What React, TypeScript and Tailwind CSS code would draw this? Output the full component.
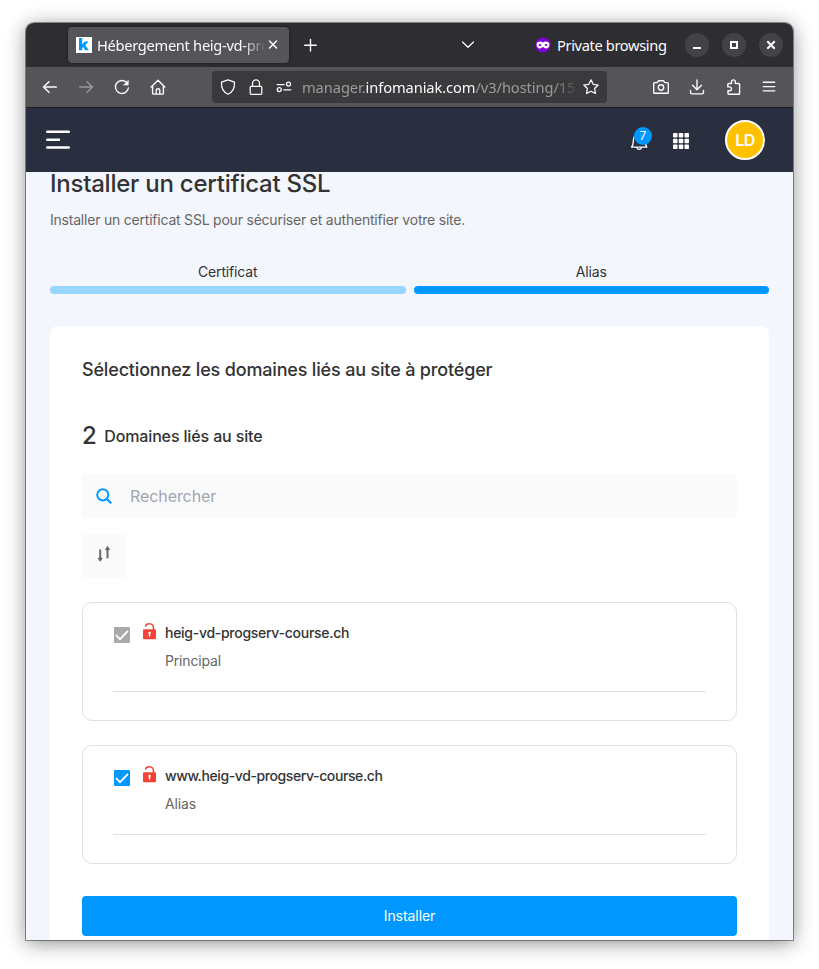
import React from "react";

const ui = "font-['Noto_Sans',sans-serif]";

type IconProps = { children: React.ReactNode; size?: number; className?: string; sw?: number };

function Icon({ children, size = 16, className = "text-[#fbfbfe]", sw = 1.25 }: IconProps) {
  return (
    <svg
      width={size}
      height={size}
      viewBox={`0 0 ${size} ${size}`}
      className={`shrink-0 ${className}`}
      fill="none"
      stroke="currentColor"
      strokeWidth={sw}
      strokeLinecap="round"
      strokeLinejoin="round"
    >
      {children}
    </svg>
  );
}

function TabBar() {
  return (
    <div className={`flex h-11 shrink-0 items-center bg-[#2e2d32] text-[#fbfbfe] ${ui}`}>
      <div className="ml-[42px] flex h-9 w-[221px] items-center rounded bg-[#555459] pl-2 shadow-[0_0_3px_rgba(0,0,0,0.5)]">
        <svg width="16" height="16" viewBox="0 0 16 16" className="shrink-0">
          <rect width="16" height="16" fill="#fff" />
          <path d="M3 1h3.2v6.6L8.8 4.6h3.7L9.3 8.2l3.6 5.1H9.2L7.2 10l-1 1.1v2.2H3z" fill="#0098ff" />
        </svg>
        <div className="ml-[5px] w-[169px] overflow-hidden whitespace-nowrap text-[14.67px] leading-5 tracking-[-0.300px] [mask-image:linear-gradient(to_right,black_146px,transparent_169px)]">
          Hébergement heig-vd-pro
        </div>
        <Icon size={16} className="-ml-[1px] text-[#fbfbfe]" sw={1.5}>
          <path d="M4.500 4l7 7M11.500 4l-7 7" />
        </Icon>
      </div>
      <Icon className="ml-[14px]" sw={1.4}>
        <path d="M7.500 2.500v11.500M1.700 8.300h11.600" />
      </Icon>
      <Icon className="ml-[141px]">
        <path d="M2.500 5l5.500 5.3L13.500 5" />
      </Icon>
      <svg width="16" height="16" viewBox="0 0 16 16" className="ml-[59px] shrink-0">
        <circle cx="8" cy="8" r="7.6" fill="#8000d7" />
        <path
          fillRule="evenodd"
          d="M1.600 6.800C2.200 4.500 5.800 4 8 5.400c2.200-1.400 5.800-.9 6.400 1.400.3 3.200-1.300 4.700-3.300 4.700-1.600 0-2.300-1.400-3.100-1.400s-1.500 1.400-3.100 1.400c-2 0-3.600-1.500-3.300-4.700zM3.400 8c.7 1.300 2.400 1.300 3.200 0-.8-1.300-2.500-1.300-3.200 0zm6 0c.8 1.300 2.500 1.300 3.200 0-.7-1.300-2.400-1.300-3.200 0z"
          fill="#fff"
        />
      </svg>
      <span className="ml-1.5 w-[110px] whitespace-nowrap text-[14.67px] leading-5 tracking-[-0.370px]">Private browsing</span>
      <div className="ml-[18px] flex gap-[13px]">
        <div className="flex size-6 items-center justify-center rounded-full bg-[#434247]">
          <div className="mt-[6px] h-[2px] w-2 bg-white" />
        </div>
        <div className="flex size-6 items-center justify-center rounded-full bg-[#434247]">
          <div className="size-2 border-2 border-white" />
        </div>
        <div className="flex size-6 items-center justify-center rounded-full bg-[#434247]">
          <svg width="10" height="10" viewBox="0 0 10 10" stroke="#fff" strokeWidth="2">
            <path d="M1.300 1.300l7.400 7.400M8.700 1.300L1.300 8.700" />
          </svg>
        </div>
      </div>
    </div>
  );
}

function NavBar() {
  return (
    <div className={`flex h-[41px] shrink-0 items-center border-b border-[#1d1d20] bg-[#555459] ${ui}`}>
      <div className="ml-4 flex gap-5">
        <Icon sw={1.5}><path d="M14.300 8H1.500M7 2.700L1.500 8 7 13.300" /></Icon>
        <Icon sw={1.4} className="text-[#99989b]"><path d="M1.700 8h12.800M9 2.700L14.500 8 9 13.300" /></Icon>
        <Icon sw={1.4}>
          <path d="M13.100 4A6.500 6.500 0 1 0 14.400 9" />
          <path d="M14.300 1.500v4.600H9.700z" fill="currentColor" strokeWidth="0.500" />
        </Icon>
        <Icon sw={1.4}>
          <path d="M1.200 8L8 1.300 14.800 8M2.600 7v7.200q0 .9.900.9h9q.9 0 .9-.9V7M6.200 15v-3.800q0-1.500 1.800-1.500t1.800 1.500V15" />
        </Icon>
      </div>
      <div className="ml-[46px] flex h-8 w-[395px] items-center rounded bg-[#3a393b] pl-2">
        <div className="flex gap-3">
          <Icon><path d="M8 .8L14.500 3.200C14.800 8.500 13 13 8 15.200 3 13 1.200 8.500 1.500 3.200z" /></Icon>
          <Icon><path d="M3.200 7.300h9.600q1 0 1 1v6q0 1-1 1H3.200q-1 0-1-1v-6q0-1 1-1zM4.500 7V4.300a3.500 3.500 0 0 1 7 0V7" /></Icon>
          <Icon><path d="M1.200 5.600h7M7.800 10.800h7" /><circle cx="12.500" cy="5.100" r="2" /><circle cx="3.300" cy="10.600" r="2" /></Icon>
        </div>
        <div className="ml-[10px] w-[273px] overflow-hidden whitespace-nowrap text-[14.67px] leading-5 tracking-[-0.080px] text-[#9c9b9d] [mask-image:linear-gradient(to_right,black_250px,transparent_278px)]">
          manager.<span className="text-[#fbfbfe]">infomaniak.com</span>/v3/hosting/15
        </div>
        <Icon className="ml-2 text-[#fbfbfe]">
          <path d="M8 .8l2.200 4.500 5 .7-3.600 3.500.9 5L8 12.200 3.500 14.500l.9-5L.8 6l5-.7z" />
        </Icon>
      </div>
      <div className="ml-[46px] flex gap-5">
        <Icon sw={1.4}>
          <path d="M1.500 3.600h2.700L5.600 1.700h4.800l1.400 1.900h2.700q.8 0 .8.800v9q0 .8-.8.800h-13q-.8 0-.8-.8v-9q0-.8.800-.8z" />
          <circle cx="8" cy="8.500" r="2.700" />
        </Icon>
        <Icon sw={1.4}><path d="M8 1v9.500M3.500 6.300L8 10.700l4.500-4.400M1.500 11.500v1.700q0 1.700 1.700 1.700h9.600q1.700 0 1.700-1.700v-1.700" /></Icon>
        <Icon sw={1.4} className="ml-px text-[#fbfbfe]">
          <path d="M5.500 4.500V2.800a1.900 1.900 0 0 1 3.800 0v1.700H12.600q1 0 1 1v9q0 .8-.8.800H3q-1 0-1-1v-2.600h1.600a1.900 1.900 0 0 0 0-3.800H1.800V5.500q0-1 1-1z" />
        </Icon>
        <Icon sw={1.4} className="-ml-px text-[#fbfbfe]"><path d="M2.300 3.300h11.400M2.300 7.600h11.400M2.300 11.900h11.400" /></Icon>
      </div>
    </div>
  );
}

function AppHeader() {
  return (
    <header className="flex h-16 shrink-0 items-center justify-between bg-[#292f3e] pl-5 pr-7">
      <svg width="24" height="20" viewBox="0 0 24 20" stroke="#fff" strokeWidth="2.400" strokeLinecap="round">
        <path d="M1.200 1.700h21.600M1.200 9.700h11.800M1.200 17.500h21.600" />
      </svg>
      <div className="flex items-center">
        <div className="relative mr-[26px] h-[18px] w-4">
          <svg width="18" height="20" viewBox="0 0 18 20" fill="none" stroke="#fff" strokeWidth="1.300">
            <path d="M.4 16.200h15.400c-1.300-1.700-1.500-4-1.500-7C14.300 5.500 12 3 8.500 3 4.700 3 2.400 5.500 2.400 9c0 3-.4 5.400-2 7.200zM5.900 16.600c.6 2.400 4 2.400 4.600 0" strokeLinejoin="round" />
          </svg>
          <span className="absolute -top-1 left-[3px] flex size-[18px] items-center justify-center rounded-full bg-[#0098ff] font-['Inter',sans-serif] text-xs leading-none text-white">
            7
          </span>
        </div>
        <svg width="16" height="16" viewBox="0 0 16 16" fill="#fff" className="mt-[2px]">
          {[0, 5.75, 11.5].flatMap((y) =>
            [0, 5.75, 11.5].map((x) => <rect key={`${x}-${y}`} x={x} y={y} width="4.500" height="4.500" rx="0.800" />)
          )}
        </svg>
        <div className="ml-9 flex size-10 items-center justify-center rounded-full border-2 border-white bg-[#ffc100] text-base font-semibold tracking-[-0.500px] text-white">
          LD
        </div>
      </div>
    </header>
  );
}

function DomainCard({ name, kind, locked }: { name: string; kind: string; locked: boolean }) {
  return (
    <div className="h-[119px] rounded-[10px] border border-[#e0e0e0] px-[30px] pt-5">
      <div className="flex h-[69px] items-start border-b border-[#e0e0e0]">
        <svg width="16" height="16" viewBox="0 0 16 16" className="ml-px mt-1 shrink-0">
          <rect width="16" height="16" rx="1" className={locked ? "fill-[#a9a9a9]" : "fill-[#0098ff]"} />
          <path d="M2 8.200l4 4 8-8.400" fill="none" stroke="#fff" strokeWidth="1.700" />
        </svg>
        <svg width="13" height="17" viewBox="0 0 13 17" className="ml-[13px] shrink-0">
          <path d="M2.400 3.600C3.200-.2 10.400-.1 10.400 4.300V7" fill="none" stroke="#f44336" strokeWidth="1.500" />
          <rect y="6.300" width="13" height="10" rx="1" fill="#f44336" />
          <path d="M5.200 10a1.300 1.300 0 1 1 2 1.100v2.300H5.800v-2.300z" fill="#fff" />
        </svg>
        <div className="ml-[9px] whitespace-nowrap text-sm leading-5">
          <div className={`font-[550] text-[#333] ${locked ? "tracking-[-0.280px]" : "tracking-[-0.400px]"}`}>{name}</div>
          <div className="mt-2 tracking-[-0.160px] text-[#666]">{kind}</div>
        </div>
      </div>
    </div>
  );
}

function Step({ label, active }: { label: string; active: boolean }) {
  return (
    <div className="flex-1">
      <div className="mb-1 text-center text-sm leading-5 tracking-[-0.160px] text-[#333]">{label}</div>
      <div className={`h-2 rounded ${active ? "bg-[#0098ff]" : "bg-[#99d6ff]"}`} />
    </div>
  );
}

function Content() {
  return (
    <main className="flex min-h-0 flex-1 flex-col bg-[#f4f6fd] px-6">
      <h1 className="whitespace-nowrap text-2xl font-[550] leading-6 tracking-[-0.240px] text-[#333]">Installer un certificat SSL</h1>
      <p className="mt-[14px] whitespace-nowrap text-sm leading-5 tracking-[-0.215px] text-[#666]">
        Installer un certificat SSL pour sécuriser et authentifier votre site.
      </p>
      <div className="mt-8 flex gap-2">
        <Step label="Certificat" active={false} />
        <Step label="Alias" active />
      </div>
      <section className="mt-8 flex-1 rounded-t-lg bg-white px-8 pt-8">
        <h2 className="whitespace-nowrap text-lg font-[550] leading-6 tracking-[-0.170px] text-[#333]">
          Sélectionnez les domaines liés au site à protéger
        </h2>
        <div className="mt-[38px] flex h-8 items-start text-[#333]">
          <span className="text-2xl font-[550] leading-8 tracking-[-0.500px]">2</span>
          <span className="ml-2 mt-1 whitespace-nowrap text-base font-[550] leading-6 tracking-[-0.140px]">Domaines liés au site</span>
        </div>
        <div className="mt-[22px] flex h-11 items-center rounded bg-[#fafafa] pl-[14px]">
          <svg width="16" height="16" viewBox="0 0 16 16" fill="none" stroke="#0098ff" strokeWidth="2">
            <circle cx="6.800" cy="6.800" r="5.600" />
            <path d="M11 11l4.300 4.300" strokeWidth="2.200" />
          </svg>
          <span className="ml-[18px] text-base tracking-[-0.080px] text-[#9fa6b2]">Rechercher</span>
        </div>
        <div className="mt-4 flex size-11 items-center justify-center rounded bg-[#fafafa]">
          <svg width="14" height="16" viewBox="0 0 14 16" className="-mt-1" fill="#666" stroke="#666" strokeLinejoin="round">
            <path d="M3.200 3.400v9M10.500 3.500v8.800" strokeWidth="1.900" fill="none" />
            <path d="M1.200 12.200h4l-2 3zM8.500 3.600h4l-2-3z" strokeWidth="1" />
          </svg>
        </div>
        <div className="mt-6 flex flex-col gap-6">
          <DomainCard name="heig-vd-progserv-course.ch" kind="Principal" locked />
          <DomainCard name="www.heig-vd-progserv-course.ch" kind="Alias" locked={false} />
        </div>
        <button className="mt-8 block h-10 w-full rounded bg-[#0098ff] text-sm tracking-[-0.060px] text-white">Installer</button>
      </section>
    </main>
  );
}

export default function App() {
  return (
    <div className="h-[969px] w-[819px] overflow-hidden bg-white pl-[26px] pt-[23px] font-['Inter',sans-serif]">
      <div className="flex h-[917px] w-[767px] flex-col overflow-hidden rounded-t-lg shadow-[0_0_0_1px_rgba(0,0,0,0.400),0_3px_20px_rgba(0,0,0,0.450)]">
        <TabBar />
        <NavBar />
        <AppHeader />
        <Content />
      </div>
    </div>
  );
}
